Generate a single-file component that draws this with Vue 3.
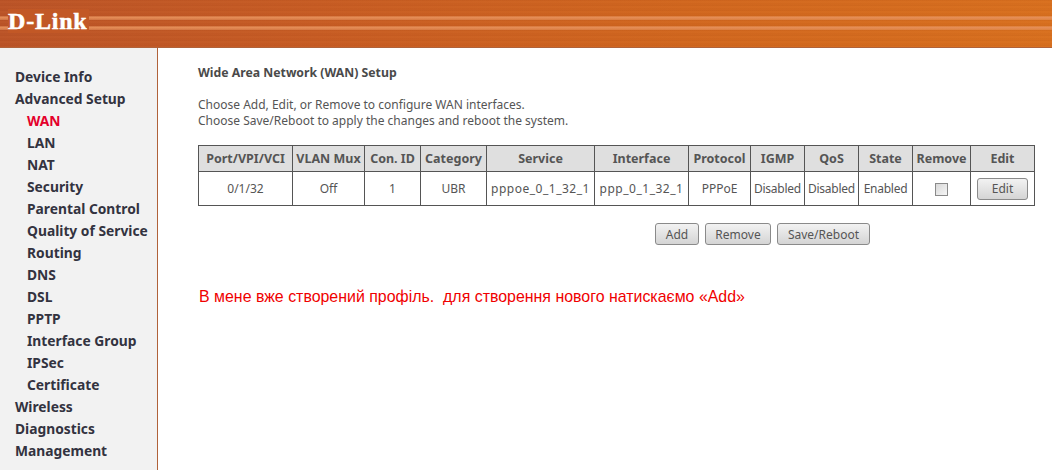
<script setup>
const menu = [
  { label: 'Device Info' },
  { label: 'Advanced Setup' },
  { label: 'WAN', sub: true, active: true },
  { label: 'LAN', sub: true },
  { label: 'NAT', sub: true },
  { label: 'Security', sub: true },
  { label: 'Parental Control', sub: true },
  { label: 'Quality of Service', sub: true },
  { label: 'Routing', sub: true },
  { label: 'DNS', sub: true },
  { label: 'DSL', sub: true },
  { label: 'PPTP', sub: true },
  { label: 'Interface Group', sub: true },
  { label: 'IPSec', sub: true },
  { label: 'Certificate', sub: true },
  { label: 'Wireless' },
  { label: 'Diagnostics' },
  { label: 'Management' }
]

const columns = [
  { title: 'Port/VPI/VCI', value: '0/1/32', width: 94 },
  { title: 'VLAN Mux', value: 'Off', width: 72 },
  { title: 'Con. ID', value: '1', width: 56 },
  { title: 'Category', value: 'UBR', width: 66 },
  { title: 'Service', value: 'pppoe_0_1_32_1', width: 108, cls: 'wide' },
  { title: 'Interface', value: 'ppp_0_1_32_1', width: 94, cls: 'wide' },
  { title: 'Protocol', value: 'PPPoE', width: 62 },
  { title: 'IGMP', value: 'Disabled', width: 54, cls: 'tight' },
  { title: 'QoS', value: 'Disabled', width: 54, cls: 'tight' },
  { title: 'State', value: 'Enabled', width: 54, cls: 'tight' },
  { title: 'Remove', type: 'check', width: 58 },
  { title: 'Edit', type: 'button', width: 64 }
]

const actions = [
  { label: 'Add', width: 44 },
  { label: 'Remove', width: 66 },
  { label: 'Save/Reboot', width: 93 }
]
</script>

<template>
  <div class="page">
    <header class="banner">
      <span class="stripe stripe-a"></span>
      <span class="stripe stripe-b"></span>
      <span class="logo">D-Link</span>
    </header>
    <div class="body">
      <nav class="sidebar">
        <a
          v-for="item in menu"
          :key="item.label"
          class="menu-item"
          :class="{ sub: item.sub, active: item.active }"
        >{{ item.label }}</a>
      </nav>
      <main class="content">
        <h1 class="title">Wide Area Network (WAN) Setup</h1>
        <p class="intro">
          Choose Add, Edit, or Remove to configure WAN interfaces.<br />
          Choose Save/Reboot to apply the changes and reboot the system.
        </p>
        <table class="wan-table">
          <colgroup>
            <col v-for="col in columns" :key="col.title" :style="{ width: col.width + 'px' }" />
          </colgroup>
          <thead>
            <tr>
              <th v-for="col in columns" :key="col.title">{{ col.title }}</th>
            </tr>
          </thead>
          <tbody>
            <tr>
              <td v-for="col in columns" :key="col.title" :class="col.cls">
                <span v-if="col.type === 'check'" class="check"></span>
                <button v-else-if="col.type === 'button'" class="btn btn-edit">Edit</button>
                <template v-else>{{ col.value }}</template>
              </td>
            </tr>
          </tbody>
        </table>
        <div class="actions">
          <button
            v-for="action in actions"
            :key="action.label"
            class="btn"
            :style="{ width: action.width + 'px' }"
          >{{ action.label }}</button>
        </div>
        <p class="note">В мене вже створений профіль.&nbsp; для створення нового натискаємо «Add»</p>
      </main>
    </div>
  </div>
</template>

<style>
html, body {
  margin: 0;
  background: #fff;
  overflow: hidden;
}
</style>

<style scoped>
.page {
  width: 1052px;
  height: 470px;
  display: flex;
  flex-direction: column;
  font-family: "Noto Sans", sans-serif;
  color: #4a4a4a;
}
.banner {
  position: relative;
  height: 48px;
  flex: none;
  display: flex;
  align-items: center;
  padding-left: 8px;
  box-sizing: border-box;
  background:
    repeating-linear-gradient(180deg, rgba(120, 40, 0, 0.05) 0 1px, rgba(255, 170, 90, 0.025) 1px 3px, rgba(120, 40, 0, 0.025) 3px 5px),
    linear-gradient(90deg, #bb5428 0%, #c75c24 30%, #d1671f 65%, #d8701f 100%);
  border-bottom: 1px solid #b0623a;
}
.stripe {
  position: absolute;
  left: 0;
  right: 0;
  height: 4px;
  background: linear-gradient(180deg, rgba(236, 160, 110, 0.3), #e58e58 40%, rgba(236, 160, 110, 0.4));
}
.stripe-a {
  top: 16px;
}
.stripe-b {
  top: 26px;
}
.logo {
  position: relative;
  font-family: "Liberation Serif", serif;
  font-weight: 700;
  font-size: 24px;
  line-height: 24px;
  letter-spacing: 0.8px;
  color: #fff;
  margin-top: -5px;
  -webkit-text-stroke: 0.5px #fff;
  background: #c25826;
  padding-right: 1px;
}
.body {
  flex: 1;
  display: flex;
  min-height: 0;
}
.sidebar {
  width: 158px;
  flex: none;
  box-sizing: border-box;
  padding: 18px 0 0 14px;
  background: #f2f2f2;
  border-left: 1px solid #f2f2f2;
  border-right: 1px solid #b0623a;
  display: flex;
  flex-direction: column;
}
.menu-item {
  height: 22px;
  line-height: 22px;
  font-size: 13.8px;
  font-weight: 700;
  color: #333340;
  white-space: nowrap;
}
.menu-item.sub {
  padding-left: 12px;
}
.menu-item.active {
  color: #e4002b;
}
.content {
  flex: 1;
  padding: 17px 0 0 40px;
  min-width: 0;
}
.title {
  margin: 0;
  font-size: 12.25px;
  line-height: 16px;
  font-weight: 700;
  color: #4a4a4a;
}
.intro {
  margin: 16px 0 0;
  font-size: 12px;
  line-height: 16px;
  color: #555;
}
.wan-table {
  margin-top: 16px;
  width: 836px;
  table-layout: fixed;
  border-collapse: collapse;
  border: 1px solid #555;
  font-size: 12px;
  color: #555;
}
.wan-table th {
  height: 25px;
  padding: 0;
  background: #dfdfdf;
  font-size: 12.5px;
  font-weight: 700;
  border: 1px solid #555;
  white-space: nowrap;
}
.wan-table td {
  height: 33px;
  padding: 0;
  text-align: center;
  border: 1px solid #555;
  white-space: nowrap;
}
.wan-table td.wide {
  letter-spacing: 0.5px;
}
.wan-table td.tight {
  letter-spacing: -0.25px;
}
.check {
  display: inline-block;
  width: 11px;
  height: 11px;
  vertical-align: middle;
  border: 1px solid #8a8a8a;
  background: linear-gradient(135deg, #d8d8d8, #f6f6f6);
}
.btn {
  height: 22px;
  padding: 0;
  font-family: "Noto Sans", sans-serif;
  font-size: 12px;
  color: #555;
  border: 1px solid #8a8a8a;
  border-radius: 3px;
  background: linear-gradient(#f2f2f2, #d4d4d4);
}
.btn-edit {
  width: 51px;
}
.actions {
  display: flex;
  gap: 6px;
  padding-left: 457px;
  margin-top: 17px;
}
.note {
  margin: 42px 0 0 1px;
  font-family: "Liberation Sans", sans-serif;
  font-size: 15.93px;
  line-height: 20px;
  color: #f00000;
}
</style>
